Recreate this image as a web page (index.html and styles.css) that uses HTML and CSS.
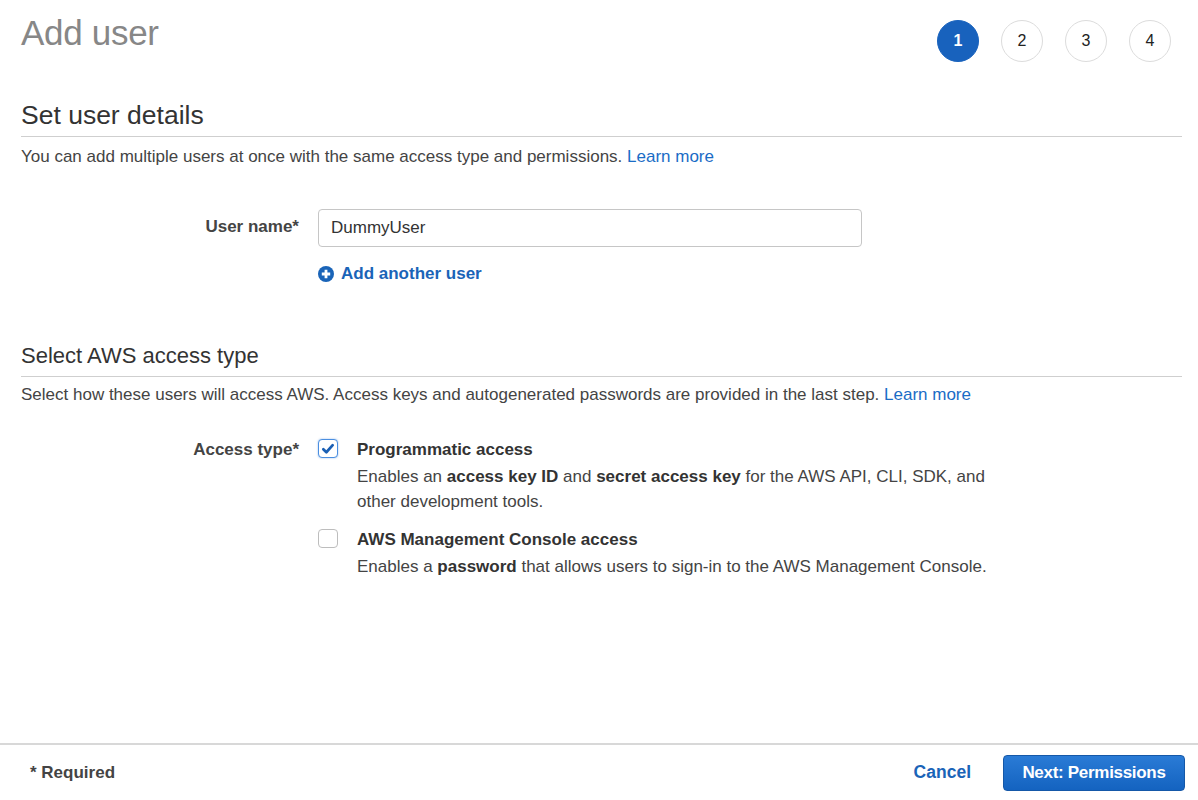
FILE: index.html
```html
<!DOCTYPE html>
<html lang="en">
<head>
<meta charset="utf-8">
<title>Add user</title>
<link rel="stylesheet" href="styles.css">
</head>
<body>
<div class="page">
  <main class="content">
    <header class="top">
      <h1 class="title">Add user</h1>
      <ol class="steps">
        <li class="step active">1</li>
        <li class="step">2</li>
        <li class="step">3</li>
        <li class="step">4</li>
      </ol>
    </header>

    <section class="section first">
      <h2 class="heading">Set user details</h2>
      <p class="desc">You can add multiple users at once with the same access type and permissions. <a class="link" href="#">Learn more</a></p>
      <div class="row row-name">
        <label class="label">User name*</label>
        <div class="control">
          <input class="input" type="text" value="DummyUser">
          <a class="add-user" href="#">
            <svg class="plus" viewBox="0 0 16 16" width="16" height="16"><circle cx="8" cy="8" r="8" fill="#1a64b8"/><path d="M8 3.8v8.4M3.8 8h8.4" stroke="#fff" stroke-width="2.8"/></svg>
            <span>Add another user</span>
          </a>
        </div>
      </div>
    </section>

    <section class="section second">
      <h2 class="heading">Select AWS access type</h2>
      <p class="desc">Select how these users will access AWS. Access keys and autogenerated passwords are provided in the last step. <a class="link" href="#">Learn more</a></p>
      <div class="row row-access">
        <label class="label">Access type*</label>
        <div class="control options">
          <div class="option">
            <span class="box checked"><svg viewBox="0 0 20 20" width="20" height="20"><path d="M4.8 10.2l3.4 3.4L15.2 5.8" fill="none" stroke="#1a5fb4" stroke-width="3" stroke-linecap="round" stroke-linejoin="round"/></svg></span>
            <div class="opt-text">
              <div class="opt-title">Programmatic access</div>
              <div class="opt-desc">Enables an <b>access key ID</b> and <b>secret access key</b> for the AWS API, CLI, SDK, and<br>other development tools.</div>
            </div>
          </div>
          <div class="option">
            <span class="box"></span>
            <div class="opt-text">
              <div class="opt-title">AWS Management Console access</div>
              <div class="opt-desc">Enables a <b>password</b> that allows users to sign-in to the AWS Management Console.</div>
            </div>
          </div>
        </div>
      </div>
    </section>
  </main>

  <footer class="footer">
    <span class="required">* Required</span>
    <div class="actions">
      <a class="cancel" href="#">Cancel</a>
      <button class="next" type="button">Next: Permissions</button>
    </div>
  </footer>
</div>
</body>
</html>
```

FILE: styles.css
```css
* { box-sizing: border-box; }
html, body { margin: 0; padding: 0; background: #fff; }
body {
  font-family: "Liberation Sans", Arial, Helvetica, sans-serif;
  color: #444;
  width: 1198px;
  height: 800px;
  overflow: hidden;
}
.page {
  height: 800px;
  display: flex;
  flex-direction: column;
}
.content {
  flex: 1;
  padding: 0 16px 0 21px;
}
.top {
  display: flex;
  justify-content: space-between;
  align-items: flex-start;
  height: 86px;
}
.title {
  margin: 13px 0 0 0;
  font-size: 35px;
  font-weight: normal;
  color: #878787;
  line-height: 40px;
  letter-spacing: -0.3px;
}
.steps {
  list-style: none;
  margin: 20px 11px 0 0;
  padding: 0;
  display: flex;
  gap: 22px;
}
.step {
  width: 42px;
  height: 42px;
  border-radius: 50%;
  border: 1px solid #dcdcdc;
  display: flex;
  align-items: center;
  justify-content: center;
  font-size: 16px;
  color: #222;
}
.step.active {
  background: #1862bd;
  border-color: #1862bd;
  color: #fff;
  font-weight: bold;
}
.heading {
  margin: 13px 0 0 0;
  font-size: 26.5px;
  font-weight: normal;
  color: #333;
  line-height: 32px;
  padding-bottom: 5px;
  border-bottom: 1px solid #cfcfcf;
}
.section.second { margin-top: 58px; }
.section.second .heading {
  margin-top: 0;
  font-size: 22px;
  line-height: 28px;
  padding-bottom: 6px;
}
.desc {
  margin: 10px 0 0 0;
  font-size: 17px;
  line-height: 20px;
  color: #444;
}
.section.second .desc { margin-top: 8px; }
.link { color: #1a6cc6; text-decoration: none; }
.row {
  display: grid;
  grid-template-columns: 278px 1fr;
  column-gap: 19px;
}
.row-name { margin-top: 42px; }
.row-access { margin-top: 35px; }
.label {
  text-align: right;
  font-weight: bold;
  font-size: 17px;
  line-height: 20px;
  color: #444;
}
.row-name .label { padding-top: 8px; }
.row-access .label { padding-top: 0; }
.control { display: flex; flex-direction: column; align-items: flex-start; }
.input {
  width: 544px;
  height: 38px;
  border: 1px solid #c6c6c6;
  border-radius: 4px;
  padding: 0 12px;
  font-family: inherit;
  font-size: 17px;
  color: #333;
  outline: none;
}
.add-user {
  margin-top: 17px;
  display: flex;
  align-items: center;
  gap: 7px;
  color: #1a64b8;
  font-weight: bold;
  font-size: 17px;
  line-height: 20px;
  text-decoration: none;
}
.plus { display: block; }
.options { gap: 16px; }
.option {
  display: flex;
  gap: 19px;
  align-items: flex-start;
}
.box {
  width: 20px;
  height: 19px;
  border: 1px solid #bdbdbd;
  border-radius: 4px;
  flex: none;
  margin-top: -1px;
  display: flex;
  align-items: center;
  justify-content: center;
  background: #fff;
}
.box.checked { border-color: #4a8ee0; box-shadow: 0 0 2px rgba(40,120,220,.5); }
.box svg { display: block; width: 18px; height: 18px; }
.opt-title {
  font-weight: bold;
  font-size: 17px;
  color: #333;
  line-height: 20px;
}
.opt-desc {
  margin-top: 4px;
  font-size: 17px;
  line-height: 25px;
  color: #444;
}
.opt-desc b { color: #333; }
.footer {
  height: 57px;
  border-top: 2px solid #d8d8d8;
  display: flex;
  align-items: center;
  justify-content: space-between;
  padding: 0 13px 0 30px;
}
.required {
  font-weight: bold;
  font-size: 17px;
  color: #444;
}
.actions { display: flex; align-items: center; gap: 32px; }
.cancel {
  color: #1a64b8;
  font-weight: bold;
  font-size: 17.5px;
  text-decoration: none;
}
.next {
  width: 182px;
  height: 36px;
  border: 1px solid #1558a8;
  border-radius: 4px;
  background: linear-gradient(#2a7bd6, #1463c0);
  color: #fff;
  font-family: inherit;
  font-weight: bold;
  font-size: 17px;
  letter-spacing: -0.3px;
}
```
